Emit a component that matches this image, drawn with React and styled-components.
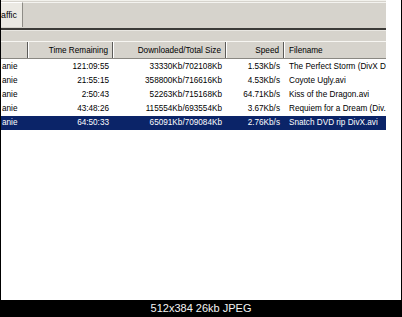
import React from "react";
import styled, { createGlobalStyle } from "styled-components";

const Global = createGlobalStyle`
  html, body {
    margin: 0;
    padding: 0;
    background: #000;
  }
  #root {
    width: 402px;
    height: 317px;
    overflow: hidden;
  }
`;

const Frame = styled.div`
  width: 402px;
  height: 317px;
  background: #000;
  display: flex;
  flex-direction: column;
`;

const Picture = styled.div`
  height: 300px;
  margin: 0 1px;
  background: #fff;
  display: flex;
  overflow: hidden;
`;

const Window = styled.div`
  width: 385px;
  display: flex;
  flex-direction: column;
  font-family: Tahoma, "Liberation Sans", Arial, sans-serif;
  font-size: 8.2px;
  color: #000;
  overflow: hidden;
`;

const TopEdge = styled.div`
  height: 1px;
  background: #f2f1ec;
  border-bottom: 1px solid #d6d3cc;
`;

const TabStrip = styled.div`
  height: 25px;
  display: flex;
  background: #d6d3cc;
`;

const Tab = styled.div`
  width: 21px;
  height: 24px;
  background: #ebe9e3;
  border-top: 1px solid #fff;
  border-right: 1px solid #8e8c86;
  display: flex;
  align-items: center;
  font-size: 8.8px;
  overflow: hidden;
  white-space: nowrap;
`;

const TabPanel = styled.div`
  flex: 1;
  border-top: 1px solid #f4f3ef;
  background: #d6d3cc;
`;

const DarkRule = styled.div`
  height: 1px;
  background: #d6d3cc;
  border-bottom: 2px solid #3c3b38;
`;

const Toolbar = styled.div`
  height: 10px;
  background: #d6d3cc;
  border-top: 1px solid #e9e7e2;
`;

const Header = styled.div`
  display: grid;
  grid-template-columns: 27px 85px 113px 58px 102px;
  height: 16px;
  border-top: 1px solid #f7f6f2;
  border-bottom: 1px solid #8a8882;
  background: #d6d3cc;
`;

const HeadCell = styled.div`
  display: flex;
  align-items: center;
  justify-content: ${(p) => (p.$right ? "flex-end" : "flex-start")};
  padding: ${(p) => (p.$right ? "0 4px 0 0" : "0 0 0 4px")};
  border-left: 1px solid #fff;
  border-right: 1px solid #5c5b58;
  white-space: nowrap;
  overflow: hidden;
  &:first-child {
    border-left: none;
  }
  &:last-child {
    border-right: none;
  }
`;

const List = styled.div`
  display: flex;
  flex-direction: column;
  padding-top: 1px;
`;

const Row = styled.div`
  display: grid;
  grid-template-columns: 27px 85px 113px 58px 102px;
  height: 14px;
  line-height: 14px;
  background: ${(p) => (p.$selected ? "#0b2468" : "transparent")};
  color: ${(p) => (p.$selected ? "#fff" : "#000")};
`;

const Cell = styled.div`
  white-space: nowrap;
  overflow: hidden;
  text-align: ${(p) => (p.$right ? "right" : "left")};
  padding: ${(p) => (p.$right ? "0 4px 0 0" : "0 0 0 5px")};
`;

const NameCell = styled(Cell)`
  padding-left: 1px;
`;

const Caption = styled.div`
  height: 17px;
  line-height: 17px;
  text-align: center;
  color: #f4f4f4;
  font-family: "Liberation Sans", Arial, sans-serif;
  font-size: 11px;
`;

const rows = [
  ["121:09:55", "33330Kb/702108Kb", "1.53Kb/s", "The Perfect Storm (DivX D"],
  ["21:55:15", "358800Kb/716616Kb", "4.53Kb/s", "Coyote Ugly.avi"],
  ["2:50:43", "52263Kb/715168Kb", "64.71Kb/s", "Kiss of the Dragon.avi"],
  ["43:48:26", "115554Kb/693554Kb", "3.67Kb/s", "Requiem for a Dream (Div."],
  ["64:50:33", "65091Kb/709084Kb", "2.76Kb/s", "Snatch DVD rip DivX.avi"],
];

export default function App() {
  return (
    <>
      <Global />
      <Frame>
        <Picture>
          <Window>
            <TopEdge />
            <TabStrip>
              <Tab>affic</Tab>
              <TabPanel />
            </TabStrip>
            <DarkRule />
            <Toolbar />
            <Header>
              <HeadCell />
              <HeadCell $right>Time Remaining</HeadCell>
              <HeadCell $right>Downloaded/Total Size</HeadCell>
              <HeadCell $right>Speed</HeadCell>
              <HeadCell>Filename</HeadCell>
            </Header>
            <List>
              {rows.map((r, i) => (
                <Row key={i} $selected={i === 4}>
                  <NameCell>anie</NameCell>
                  <Cell $right>{r[0]}</Cell>
                  <Cell $right>{r[1]}</Cell>
                  <Cell $right>{r[2]}</Cell>
                  <Cell>{r[3]}</Cell>
                </Row>
              ))}
            </List>
          </Window>
        </Picture>
        <Caption>512x384 26kb JPEG</Caption>
      </Frame>
    </>
  );
}
